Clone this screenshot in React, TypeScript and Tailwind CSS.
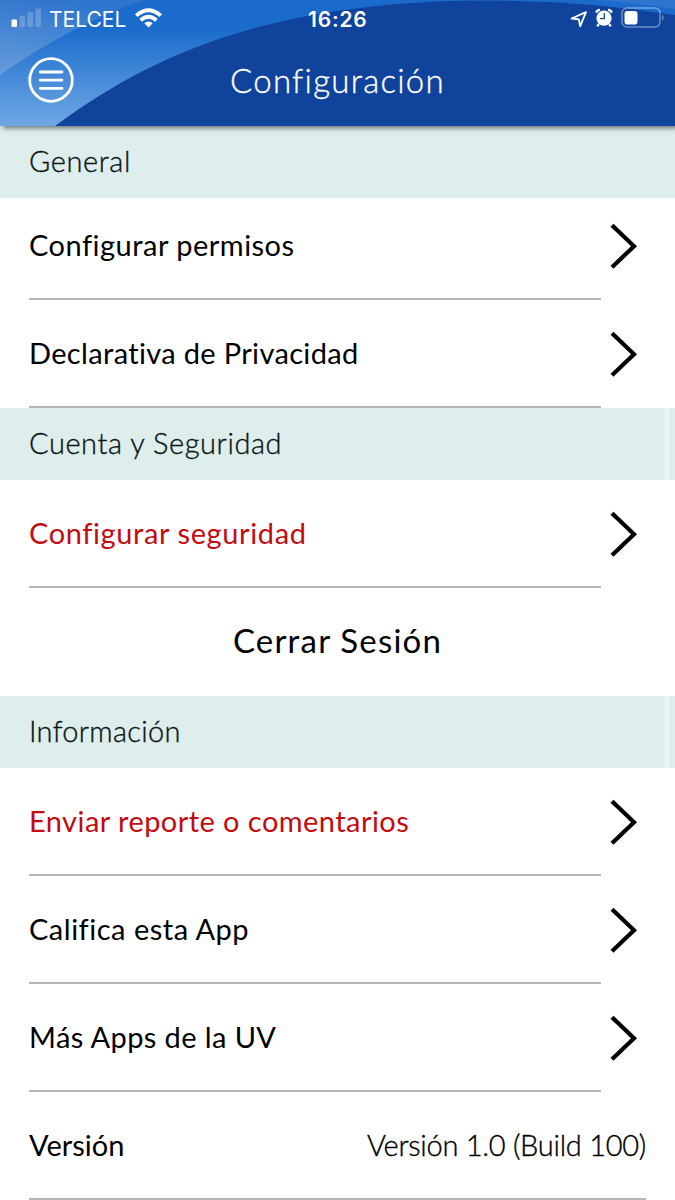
import type { ReactNode } from "react";

function Chevron() {
  return (
    <svg className="h-[48px] w-[30px] shrink-0" viewBox="0 0 30 48" fill="none" stroke="#000" strokeWidth="4.2">
      <path d="M3 3.2 L25 24.2 L3 45.2" />
    </svg>
  );
}

function Band({ children, className }: { children: ReactNode; className: string }) {
  return (
    <div className="flex h-[72px] shrink-0 bg-[#ddeeed]">
      <h2 className={`flex flex-1 items-center pb-[3px] pl-[29px] text-[29px] leading-none font-light text-[#0c1414] [-webkit-text-stroke:0.35px] ${className}`}>
        {children}
      </h2>
      <div className="w-[6px] bg-[#e9f5f4]" />
      <div className="w-[5px]" />
    </div>
  );
}

function Row({ children, className = "", first = false }: { children: ReactNode; className?: string; first?: boolean }) {
  return (
    <div className={`flex shrink-0 ${first ? "h-[102px]" : "h-[108px]"}`}>
      <div className={`ml-[29px] flex w-[572px] items-center border-b-2 border-[#b4b6b6] text-[29px] leading-none ${first ? "pb-[8px]" : "pb-[1px]"} ${className}`}>
        {children}
      </div>
      <div className={`flex items-center pl-[8px] ${first ? "pb-[6px]" : ""}`}>
        <Chevron />
      </div>
    </div>
  );
}

function Header() {
  return (
    <header className="relative z-10 h-[126px] shrink-0 text-white shadow-[3px_2px_5px_rgba(0,0,0,0.55)]">
      <svg className="absolute inset-0 h-[126px] w-[675px]" viewBox="0 0 675 126">
        <defs>
          <linearGradient id="outer" gradientUnits="userSpaceOnUse" x1="60" y1="0" x2="40" y2="126">
            <stop offset="0" stopColor="#2f75cd" />
            <stop offset="0.6" stopColor="#6199da" />
            <stop offset="1" stopColor="#78aee6" />
          </linearGradient>
          <linearGradient id="middle" gradientUnits="userSpaceOnUse" x1="0" y1="28" x2="0" y2="126">
            <stop offset="0" stopColor="#1a6bcc" />
            <stop offset="1" stopColor="#6fa8e4" />
          </linearGradient>
        </defs>
        <rect width="675" height="126" fill="url(#outer)" />
        <path d="M0 75 Q68 27 143 0 H595 Q640 3 675 9 V126 H0 Z" fill="url(#middle)" />
        <path d="M55 126 C155 52 265 8 450 1 Q570 -2 675 15 V126 Z" fill="#10439b" />
      </svg>
      <div className="relative flex h-[36px] items-center font-['Inter',sans-serif]">
        <svg className="ml-[11px] h-[20px] w-[31px]" viewBox="0 0 31 20" fill="#fff">
          <rect x="0.5" y="11.5" width="5.5" height="7.5" rx="1.3" />
          <rect x="8.5" y="8" width="5.5" height="11" rx="1.3" opacity="0.2" />
          <rect x="16.5" y="4" width="5.5" height="15" rx="1.3" opacity="0.2" />
          <rect x="24.5" y="0.5" width="5.5" height="18.5" rx="1.3" opacity="0.2" />
        </svg>
        <span className="ml-[7px] w-[86px] pt-[2px] text-[21px] leading-none">TELCEL</span>
        <svg className="h-[20px] w-[27px]" viewBox="0 0 27 20" fill="none" stroke="#fff" strokeWidth="3.8">
          <path d="M1.2 7.6 Q13.5 -3.2 25.8 7.6" />
          <path d="M5.6 12.2 Q13.5 5.4 21.4 12.2" />
          <path d="M13.5 19.5 L9.3 15.2 Q13.5 11.7 17.7 15.2 Z" fill="#fff" stroke="none" />
        </svg>
        <span className="ml-[146px] w-[262px] pt-[2px] text-[21px] leading-none font-semibold tracking-[0.8px]">16:26</span>
        <svg className="mt-[1px] h-[18px] w-[18px]" viewBox="0 0 18 18" fill="none" stroke="#fff" strokeWidth="1.8" strokeLinejoin="round">
          <path d="M1.5 8.5 L16 2.2 L10.2 16.2 L8.8 9.4 Z" />
        </svg>
        <svg className="ml-[7px] h-[20px] w-[18px]" viewBox="0 0 18 20">
          <path d="M1.2 4.6 Q2 2 5 1.8 M16.8 4.6 Q16 2 13 1.8 M4 16 L2.2 18.3 M14 16 L15.8 18.3" stroke="#fff" strokeWidth="2.2" fill="none" />
          <circle cx="9" cy="10.2" r="7.6" fill="#fff" />
          <path d="M9.3 5.3 V10.7 H5" stroke="#10439b" strokeWidth="1.3" fill="none" />
        </svg>
        <svg className="ml-[8px] h-[22px] w-[44px]" viewBox="0 0 44 22">
          <rect x="1" y="1" width="38" height="19" rx="5" fill="none" stroke="#fff" strokeWidth="1.5" opacity="0.4" />
          <rect x="3.5" y="4" width="13" height="13.5" rx="2.8" fill="#fff" />
          <path d="M41 7.5 Q44.5 10.5 41 13.5 Z" fill="#fff" opacity="0.4" />
        </svg>
      </div>
      <div className="relative flex h-[88px] items-center">
        <svg className="ml-[28px] h-[46px] w-[46px]" viewBox="0 0 46 46" fill="none" stroke="#fff" strokeWidth="2.8" strokeLinecap="round">
          <circle cx="23" cy="23" r="21.3" />
          <path d="M12.3 15 H34 M12.3 23.2 H34 M12.3 31.4 H34" />
        </svg>
        <h1 className="ml-[156px] text-[33px] leading-none font-light tracking-[1.25px] [-webkit-text-stroke:0.35px]">Configuración</h1>
      </div>
    </header>
  );
}

export default function App() {
  return (
    <div className="flex h-[1200px] w-[675px] flex-col overflow-hidden bg-white font-['Lato',sans-serif] text-black">
      <Header />
      <div className="flex h-[72px] shrink-0 items-center bg-[#ddeeed] pb-[4px] pl-[29px]">
        <h2 className="text-[29px] leading-none font-light tracking-[0.6px] text-[#0c1414] [-webkit-text-stroke:0.35px]">General</h2>
      </div>
      <Row first className="tracking-[0.48px]">Configurar permisos</Row>
      <Row className="tracking-[0.34px]">Declarativa de Privacidad</Row>
      <Band className="tracking-[0.57px]">Cuenta y Seguridad</Band>
      <Row className="tracking-[0.6px] text-[#c30b10]">Configurar seguridad</Row>
      <button className="flex h-[108px] shrink-0 items-center justify-center pb-[3px] text-[33px] leading-none tracking-[1.2px]">Cerrar Sesión</button>
      <Band className="tracking-[0.3px]">Información</Band>
      <Row className="tracking-[0.44px] text-[#c30b10]">Enviar reporte o comentarios</Row>
      <Row className="tracking-[0.5px]">Califica esta App</Row>
      <Row className="tracking-[0.4px]">Más Apps de la UV</Row>
      <div className="mx-[29px] flex h-[108px] shrink-0 items-center justify-between border-b-2 border-[#b4b6b6] pb-[1px] text-[29px] leading-none">
        <span>Versión</span>
        <span className="font-light tracking-[-0.27px] [-webkit-text-stroke:0.35px]">Versión 1.0 (Build 100)</span>
      </div>
    </div>
  );
}
